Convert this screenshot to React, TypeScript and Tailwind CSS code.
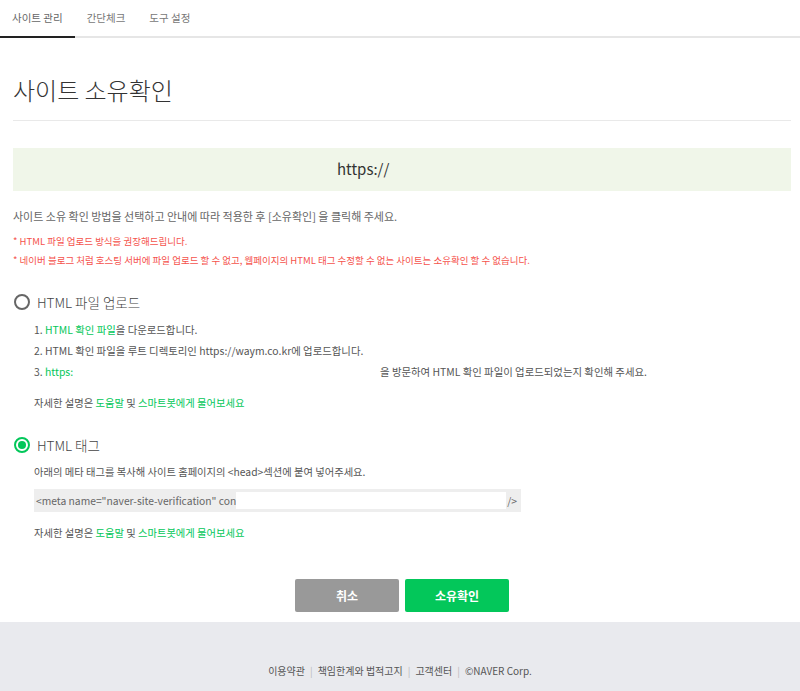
import React from "react";

const font = { fontFamily: '"Noto Sans CJK KR", "Noto Sans", sans-serif' };

const Radio = ({ checked }: { checked?: boolean }) =>
  checked ? (
    <span className="flex h-[16px] w-[16px] items-center justify-center rounded-full border-2 border-[#03c75a]">
      <span className="h-[8px] w-[8px] rounded-full bg-[#03c75a]" />
    </span>
  ) : (
    <span className="h-[16px] w-[16px] rounded-full border-2 border-[#666]" />
  );

const HelpLine = () => (
  <p className="text-[10.3px] leading-[16px] text-[#555]">
    자세한 설명은 <span className="text-[#03c75a]">도움말</span> 및{" "}
    <span className="text-[#03c75a]">스마트봇에게 물어보세요</span>
  </p>
);

export default function App() {
  return (
    <div className="flex min-h-[691px] w-[800px] flex-col bg-white" style={font}>
      {/* 상단 탭 */}
      <div className="flex h-[38px] border-b-2 border-[#e6e6e6]">
        <div className="-mb-[2px] flex items-center border-b-2 border-[#222] px-3 text-[10.5px] text-[#666]">
          사이트 관리
        </div>
        <div className="flex items-center px-3 text-[10.5px] text-[#777]">간단체크</div>
        <div className="flex items-center px-3 text-[10.5px] text-[#777]">도구 설정</div>
      </div>

      <div className="flex-1 pl-[13px] pr-[9px]">
        <h1 className="pt-[35px] pb-[13px] text-[24px] font-light leading-[34px] text-[#333]">사이트 소유확인</h1>
        <div className="border-t border-[#e9e9e9]" />

        <div className="mt-[27px] flex h-[43px] items-center bg-[#f0f6e9] pl-[324px] text-[15px] text-[#333]">
          https://
        </div>

        <p className="mt-[17px] text-[11px] leading-[16px] text-[#666]">
          사이트 소유 확인 방법을 선택하고 안내에 따라 적용한 후 [소유확인] 을 클릭해 주세요.
        </p>
        <div className="mt-[8px] flex flex-col text-[9.5px] leading-[19px] text-[#f5524c]">
          <p>* HTML 파일 업로드 방식을 권장해드립니다.</p>
          <p>* 네이버 블로그 처럼 호스팅 서버에 파일 업로드 할 수 없고, 웹페이지의 HTML 태그 수정할 수 없는 사이트는 소유확인 할 수 없습니다.</p>
        </div>

        {/* HTML 파일 업로드 */}
        <div className="mt-[22px] flex h-[20px] items-center gap-[7px] pl-[1px]">
          <Radio />
          <span className="text-[13.5px] font-light text-[#444]">HTML 파일 업로드</span>
        </div>
        <div className="mt-[7px] pl-[21px] text-[10.4px] leading-[21px] text-[#555]">
          <p>
            1. <span className="text-[#03c75a]">HTML 확인 파일</span>을 다운로드합니다.
          </p>
          <p>2. HTML 확인 파일을 루트 디렉토리인 https://waym.co.kr에 업로드합니다.</p>
          <p className="flex">
            <span className="w-[346px]">
              3. <span className="text-[#03c75a]">https:</span>
            </span>
            <span>을 방문하여 HTML 확인 파일이 업로드되었는지 확인해 주세요.</span>
          </p>
          <div className="mt-[13px]">
            <HelpLine />
          </div>
        </div>

        {/* HTML 태그 */}
        <div className="mt-[24px] flex h-[20px] items-center gap-[7px] pl-[1px]">
          <Radio checked />
          <span className="text-[13.5px] font-light text-[#444]">HTML 태그</span>
        </div>
        <div className="mt-[9px] pl-[21px]">
          <p className="text-[10.3px] leading-[16px] text-[#555]">
            아래의 메타 태그를 복사해 사이트 홈페이지의 &lt;head&gt;섹션에 붙여 넣어주세요.
          </p>
          <div className="relative mt-[9px] flex h-[23px] w-[487px] items-center bg-[#eeeeee] pl-[2px] pr-[4px] text-[10.3px] text-[#666]">
            <span className="whitespace-nowrap">&lt;meta name="naver-site-verification" content="</span>
            <span className="ml-auto">/&gt;</span>
            <span className="absolute left-[202px] top-[3px] h-[17px] w-[270px] bg-white" />
          </div>
          <div className="mt-[13px]">
            <HelpLine />
          </div>
        </div>

        <div className="mt-[38px] flex justify-center gap-[6px]">
          <button className="h-[33px] w-[104px] rounded-[2px] bg-[#999] text-[12px] font-bold text-white">
            취소
          </button>
          <button className="h-[33px] w-[104px] rounded-[2px] bg-[#03c75a] text-[12px] font-bold text-white">
            소유확인
          </button>
        </div>
      </div>

      <footer className="mt-[10px] flex h-[69px] justify-center gap-[5px] bg-[#e9eaee] pt-[41px] text-[10px] leading-[16px] text-[#555]">
        <span>이용약관</span>
        <span className="text-[#bbb]">|</span>
        <span>책임한계와 법적고지</span>
        <span className="text-[#bbb]">|</span>
        <span>고객센터</span>
        <span className="text-[#bbb]">|</span>
        <span>©NAVER Corp.</span>
      </footer>
    </div>
  );
}
